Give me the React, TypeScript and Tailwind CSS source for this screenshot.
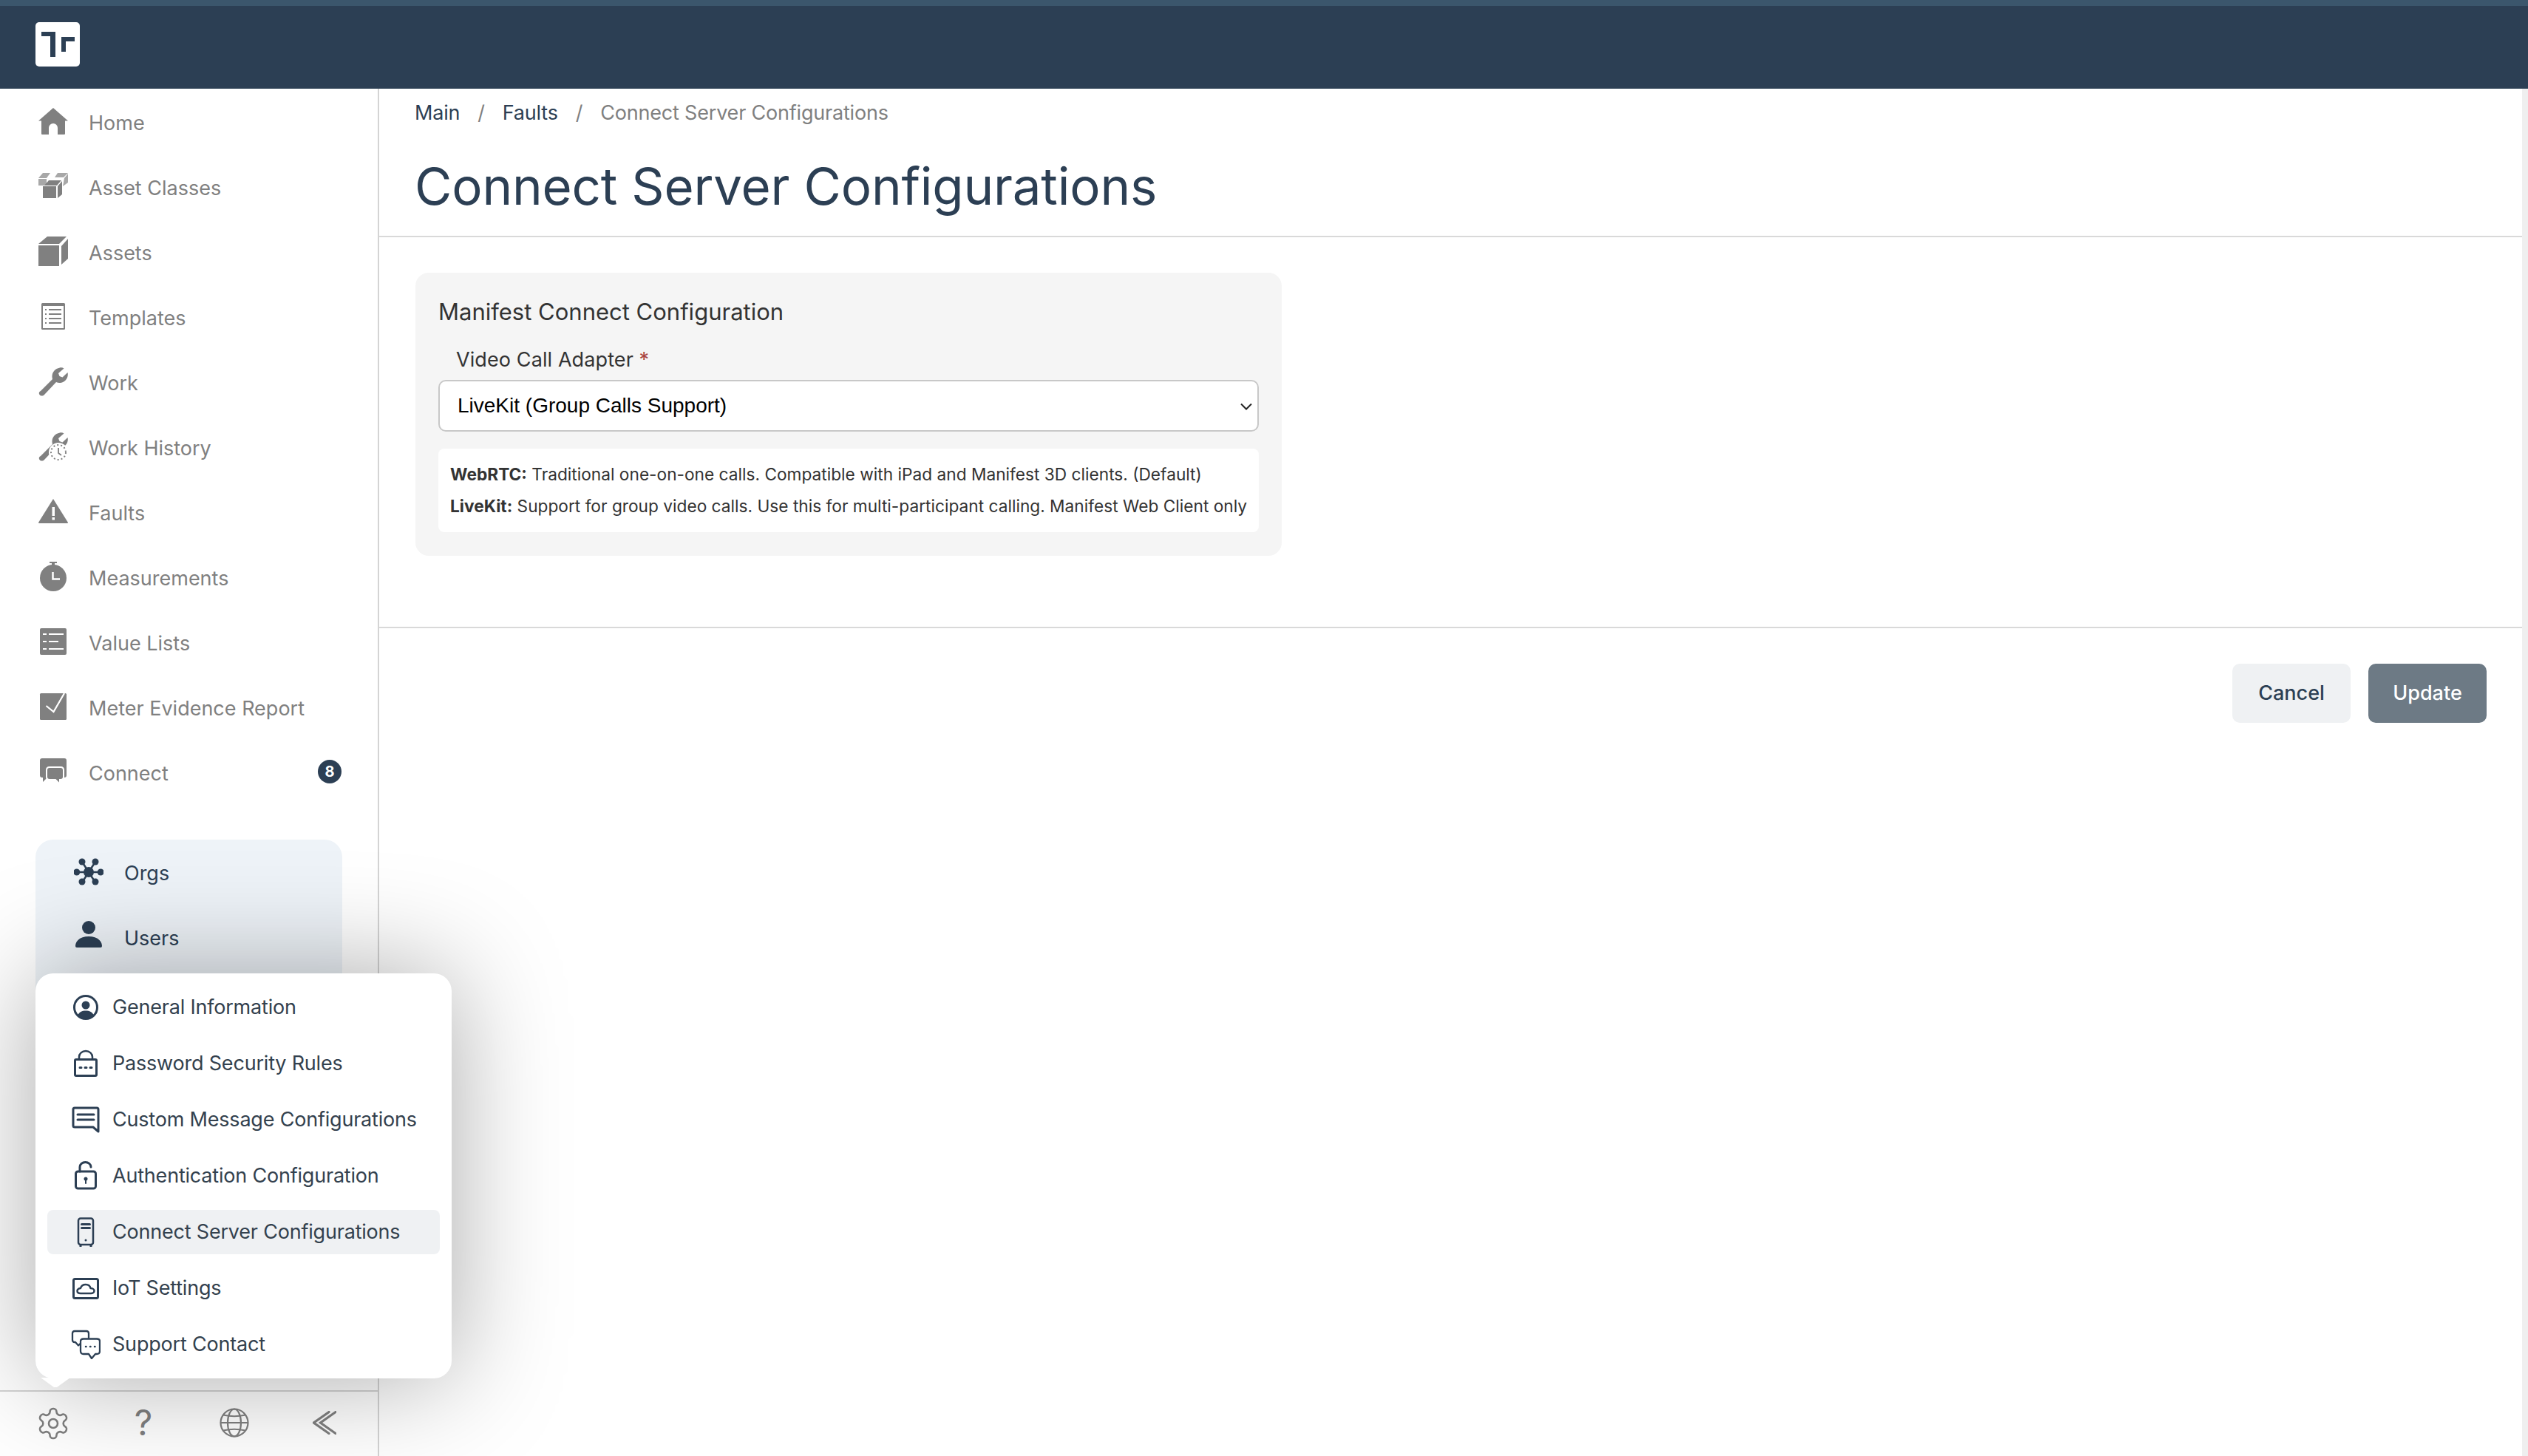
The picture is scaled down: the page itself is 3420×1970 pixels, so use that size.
import { ReactNode } from 'react';

const WRENCH =
  'M3 33 L19 17 C17 10 21 3 29 1.500 C31 1 33 1.500 34.500 2.500 L27 9 L28.500 13 L32.500 14.500 L39.500 8 C41 14 37 21 30 22 C28 22.300 26 22 24 21 L8 38 C6 40 3 40 1.500 38 C0 36 1 34 3 33 Z';

function NavIcon({ children }: { children: ReactNode }) {
  return (
    <svg viewBox="0 0 40 40" className="w-[40px] h-[40px] shrink-0 mb-[6px] text-[#808080]" fill="currentColor">
      {children}
    </svg>
  );
}

function MenuIcon({ children }: { children: ReactNode }) {
  return (
    <svg
      viewBox="0 0 40 40"
      className="w-[40px] h-[40px] shrink-0 text-[#2c3f54]"
      fill="none"
      stroke="currentColor"
      strokeWidth="3"
      strokeLinecap="round"
      strokeLinejoin="round"
    >
      {children}
    </svg>
  );
}

const navItems: { label: string; icon: ReactNode; badge?: string }[] = [
  {
    label: 'Home',
    icon: <path d="M20 2 L40 19.500 L36 19.500 V37 Q36 38 35 38 H26 V29 A6 6 0 0 0 14 29 V38 H5 Q4 38 4 37 V19.500 H0 Z" />,
  },
  {
    label: 'Asset Classes',
    icon: (
      <>
        <g fill="#a8a8a8">
          <polygon points="0,9 6,2 16,2 11,9" />
          <rect x="0" y="10" width="11" height="9" />
          <polygon points="26,2 40,2 34,8 22,8" />
          <polygon points="35,9 40,3 40,15 33,20" />
        </g>
        <polygon points="8,19 14,12 31,12 25,19" />
        <rect x="6" y="20" width="18" height="16" />
        <polygon points="26,20 32,13 32,31 26,36" />
      </>
    ),
  },
  {
    label: 'Assets',
    icon: (
      <>
        <polygon points="0,10 12,0 38,0 28,10" />
        <rect x="0" y="12" width="28" height="28" />
        <polygon points="31,13 40,3 40,30 31,38" />
      </>
    ),
  },
  {
    label: 'Templates',
    icon: (
      <>
        <rect x="4" y="2" width="32" height="36" rx="1.500" />
        <rect x="6" y="6" width="28" height="30" fill="#fff" />
        <path
          d="M14 11 H31 M14 17 H31 M14 23 H31 M14 29 H31 M9 11 H11 M9 17 H11 M9 23 H11 M9 29 H11"
          stroke="currentColor"
          strokeWidth="2"
        />
      </>
    ),
  },
  { label: 'Work', icon: <path d={WRENCH} /> },
  {
    label: 'Work History',
    icon: (
      <>
        <path d={WRENCH} />
        <circle cx="27" cy="28" r="13" fill="#fff" />
        <circle cx="27" cy="28" r="10" fill="none" stroke="currentColor" strokeWidth="2" strokeDasharray="2 3" />
        <path d="M27 22 V29 L31 32" fill="none" stroke="currentColor" strokeWidth="1.800" />
      </>
    ),
  },
  {
    label: 'Faults',
    icon: (
      <>
        <path d="M20 3 L40 35 Q40 36 39 36 H1 Q0 36 0 35 Z" />
        <rect x="18.500" y="14" width="3.500" height="12" fill="#fff" />
        <rect x="18.500" y="28" width="3.500" height="3.500" fill="#fff" />
      </>
    ),
  },
  {
    label: 'Measurements',
    icon: (
      <>
        <circle cx="20" cy="22" r="18" />
        <rect x="15" y="0" width="10" height="2" />
        <rect x="18" y="1" width="4" height="4" />
        <path d="M19.500 14 V23.500 H29" fill="none" stroke="#fff" strokeWidth="2.500" />
      </>
    ),
  },
  {
    label: 'Value Lists',
    icon: (
      <>
        <rect x="2" y="2" width="36" height="36" rx="2" />
        <path d="M6 10 H11 M14 10 H34 M6 20 H11 M14 20 H27 M6 30 H11 M14 30 H34" stroke="#fff" strokeWidth="2" />
      </>
    ),
  },
  {
    label: 'Meter Evidence Report',
    icon: (
      <>
        <rect x="2" y="2" width="36" height="36" rx="1.500" />
        <path d="M10.500 19 L20.500 27 L35 2" fill="none" stroke="#fff" strokeWidth="2.200" />
      </>
    ),
  },
  {
    label: 'Connect',
    badge: '8',
    icon: (
      <>
        <path d="M5 2 H35 Q38 2 38 5 V25 Q38 28 35 28 H12 L6 34 V28 H5 Q2 28 2 25 V5 Q2 2 5 2 Z" />
        <path
          d="M15 14 H30 Q34 14 34 18 V27 Q34 31 30 31 H29 V37 L23 31 H15 Q11 31 11 27 V18 Q11 14 15 14 Z"
          stroke="#fff"
          strokeWidth="2"
        />
      </>
    ),
  },
];

const settingsItems: { label: string; active?: boolean; icon: ReactNode }[] = [
  {
    label: 'General Information',
    icon: (
      <>
        <circle cx="20" cy="20" r="15.500" />
        <circle cx="20" cy="17" r="5.500" fill="currentColor" stroke="none" />
        <path d="M9 31 C11 26 15 24.500 20 24.500 C25 24.500 29 26 31 31 C28 34.500 24 35.500 20 35.500 C16 35.500 12 34.500 9 31 Z" fill="currentColor" stroke="none" />
      </>
    ),
  },
  {
    label: 'Password Security Rules',
    icon: (
      <>
        <rect x="5.500" y="14.500" width="29" height="22" rx="1.500" />
        <path d="M11 14 V11 A9 8 0 0 1 29 11 V14" strokeWidth="2.500" />
        <path d="M12 25.500 H14 M19 25.500 H21 M26 25.500 H28" />
      </>
    ),
  },
  {
    label: 'Custom Message Configurations',
    icon: (
      <>
        <path d="M5 4 H35 Q37 4 37 6 V36 L30 30 H5 Q3 30 3 28 V6 Q3 4 5 4 Z" />
        <path d="M9 13 H31 M9 20 H31" />
      </>
    ),
  },
  {
    label: 'Authentication Configuration',
    icon: (
      <>
        <rect x="6.500" y="14" width="27" height="23" rx="3" />
        <path d="M12 14 V8 A7.500 6.500 0 0 1 27 8" />
        <circle cx="20" cy="24" r="2.500" fill="currentColor" stroke="none" />
        <path d="M20 25 V30" strokeWidth="2" />
      </>
    ),
  },
  {
    label: 'Connect Server Configurations',
    active: true,
    icon: (
      <>
        <rect x="10" y="1.500" width="20" height="35.500" rx="3" strokeWidth="2.500" />
        <path d="M14.500 9.500 H25.500 M14.500 14.500 H25.500" />
        <circle cx="20" cy="31" r="1.500" fill="currentColor" stroke="none" />
        <path d="M13 38 V39.500 M27 38 V39.500" />
      </>
    ),
  },
  {
    label: 'IoT Settings',
    icon: (
      <>
        <rect x="3.500" y="7.500" width="33" height="26" rx="2" />
        <path
          d="M13 27 C10 27 8.500 25.500 8.500 23.500 C8.500 21.500 11 20 13 20 C14 16.500 17 15 20 15 C24 15 26 17.500 26.500 20 C29 20 31.500 21.500 31.500 23.500 C31.500 25.500 29.500 27 27 27 Z"
          strokeWidth="2.500"
        />
      </>
    ),
  },
  {
    label: 'Support Contact',
    icon: (
      <>
        <path d="M24 11 V5 Q24 2 21 2 H5 Q2 2 2 5 V14 Q2 17 5 17 H6 L10 21.500 L12 19.500" strokeWidth="2.300" />
        <path
          d="M17 12.500 H35 Q39 12.500 39 16 V29 Q39 33 35 33 H33 L28 39 L24 33 H17 Q13 33 13 29 V16 Q13 12.500 17 12.500 Z"
          strokeWidth="2.300"
        />
        <path d="M20 23 H20.500 M26 23 H26.500 M32 23 H32.500" strokeWidth="2.500" />
      </>
    ),
  },
];

function Header() {
  return (
    <header className="h-[120px] shrink-0 bg-[#2c3f54] border-t-[8px] border-[#3b566c] pl-[48px] pt-[22px]">
      <div className="w-[60px] h-[60px] rounded-[5px] bg-white">
        <svg viewBox="0 0 60 60" className="w-[60px] h-[60px]" fill="#2c3f54">
          <polygon points="8,13 27,13 27,47 20,47 20,19 8,19" />
          <polygon points="35,20 53,20 53,26 41,26 41,40 35,40" />
        </svg>
      </div>
    </header>
  );
}

function Sidebar() {
  return (
    <aside className="w-[513px] shrink-0 border-r-[2px] border-[#d4d4d4] flex flex-col relative">
      <nav className="pt-[3px]">
        {navItems.map((item) => (
          <div key={item.label} className="h-[88px] pl-[52px] pr-[49px] flex items-center">
            <NavIcon>{item.icon}</NavIcon>
            <span className="ml-[28px] text-[27px] text-[#808080]">{item.label}</span>
            {item.badge && (
              <span className="ml-auto mb-[6px] w-[32px] h-[32px] rounded-full bg-[#2c3f54] text-white text-[20px] font-bold flex items-center justify-center">
                {item.badge}
              </span>
            )}
          </div>
        ))}
      </nav>

      <div className="flex-1 mt-[45px] mb-[16px] ml-[48px] mr-[48px] pt-[2px] rounded-[24px] bg-[#eef3f8]">
        <div className="h-[88px] pl-[52px] flex items-center">
          <svg viewBox="0 0 40 40" className="w-[40px] h-[40px] mb-[4px] text-[#2c3f54]" fill="currentColor">
            <path d="M3 20 H37 M11 6 L29 34 M29 6 L11 34" stroke="currentColor" strokeWidth="2.500" />
            <circle cx="20" cy="20" r="7" />
            <circle cx="3.800" cy="20" r="4.500" />
            <circle cx="36.200" cy="20" r="4.500" />
            <circle cx="11" cy="6" r="4.500" />
            <circle cx="29" cy="6" r="4.500" />
            <circle cx="11" cy="33" r="4.500" />
            <circle cx="29" cy="33" r="4.500" />
          </svg>
          <span className="ml-[28px] text-[27px] text-[#2c3f54]">Orgs</span>
        </div>
        <div className="h-[88px] pl-[52px] flex items-center">
          <svg viewBox="0 0 40 40" className="w-[40px] h-[40px] mb-[8px] text-[#2c3f54]" fill="currentColor">
            <circle cx="20" cy="9" r="9" />
            <path d="M2 34 C2 26 10 21 20 21 C30 21 38 26 38 34 Q38 36 36 36 H4 Q2 36 2 34 Z" />
          </svg>
          <span className="ml-[28px] text-[27px] text-[#2c3f54]">Users</span>
        </div>
      </div>

      <div className="h-[89px] shrink-0 border-t-[2px] border-[#d4d4d4] flex items-center text-[#808080]">
        <svg
          viewBox="0 0 24 24"
          className="w-[48px] h-[48px] ml-[48px] -mt-[2px]"
          fill="none"
          stroke="currentColor"
          strokeWidth="1.300"
          strokeLinecap="round"
          strokeLinejoin="round"
        >
          <path d="M12.220 2h-.44a2 2 0 0 0-2 2v.18a2 2 0 0 1-1 1.730l-.43.25a2 2 0 0 1-2 0l-.15-.08a2 2 0 0 0-2.730.73l-.22.38a2 2 0 0 0 .730 2.730l.15.1a2 2 0 0 1 1 1.720v.510a2 2 0 0 1-1 1.740l-.15.090a2 2 0 0 0-.730 2.730l.22.38a2 2 0 0 0 2.730.73l.15-.08a2 2 0 0 1 2 0l.43.25a2 2 0 0 1 1 1.730V20a2 2 0 0 0 2 2h.44a2 2 0 0 0 2-2v-.18a2 2 0 0 1 1-1.730l.43-.25a2 2 0 0 1 2 0l.15.08a2 2 0 0 0 2.730-.73l.22-.39a2 2 0 0 0-.730-2.730l-.15-.08a2 2 0 0 1-1-1.740v-.5a2 2 0 0 1 1-1.740l.15-.09a2 2 0 0 0 .730-2.730l-.22-.38a2 2 0 0 0-2.730-.73l-.15.08a2 2 0 0 1-2 0l-.43-.25a2 2 0 0 1-1-1.730V4a2 2 0 0 0-2-2z" />
          <circle cx="12" cy="12" r="3" />
        </svg>
        <span className="ml-[83px] w-[30px] -mt-[4px] text-[48px] leading-none text-center">?</span>
        <svg viewBox="0 0 40 40" className="w-[40px] h-[40px] ml-[88px] -mt-[4px]" fill="none" stroke="currentColor" strokeWidth="2.200">
          <circle cx="20" cy="20" r="18.500" />
          <ellipse cx="20" cy="20" rx="9" ry="18.500" />
          <path d="M5 9.500 Q20 13 35 9.500 M1.500 20 H38.500 M5 30.500 Q20 27 35 30.500" />
        </svg>
        <svg viewBox="0 0 32 32" className="w-[32px] h-[32px] ml-[86px] -mt-[4px]" fill="none" stroke="currentColor" strokeWidth="3.200" strokeLinecap="round">
          <path d="M22 1.500 L1.500 16 L22 30.500 M31 1.500 L10.500 16 L31 30.500" />
        </svg>
      </div>
    </aside>
  );
}

function SettingsMenu() {
  return (
    <div className="absolute left-[48px] top-[1317px] w-[563px] h-[548px] rounded-[24px] bg-white px-[16px] pt-[16px] shadow-[0_0_150px_rgba(0,0,0,0.34)]">
      {settingsItems.map((item) => (
        <div
          key={item.label}
          className={`h-[60px] mb-[16px] pl-[32px] rounded-[8px] flex items-center text-[27px] tracking-[-0.2px] text-[#33414e] ${
            item.active ? 'bg-[#eff1f3]' : ''
          }`}
        >
          <MenuIcon>{item.icon}</MenuIcon>
          <span className="ml-[16px]">{item.label}</span>
        </div>
      ))}
      <svg viewBox="0 0 40 14" className="absolute left-[7px] top-[547px] w-[40px] h-[14px]" fill="#fff">
        <polygon points="0,0 40,0 22,13 18,13" />
      </svg>
    </div>
  );
}

function MainContent() {
  return (
    <main className="flex-1 min-w-0">
      <div className="h-[201px] border-b-[2px] border-[#d9d9d9] pl-[48px] pt-[16px]">
        <div className="h-[34px] flex items-center text-[27px] tracking-[-0.2px] text-[#2c3f54]">
          <span>Main</span>
          <span className="mx-[24px] text-[#808080]">/</span>
          <span>Faults</span>
          <span className="mx-[24px] text-[#808080]">/</span>
          <span className="text-[#808080]">Connect Server Configurations</span>
        </div>
        <h1 className="mt-[38px] text-[69px] leading-[88px] tracking-[-0.2px] font-normal text-[#2c3f54]">
          Connect Server Configurations
        </h1>
      </div>

      <div className="h-[529px] border-b-[2px] border-[#d9d9d9] pl-[49px] pt-[48px]">
        <section className="w-[1172px] h-[383px] rounded-[18px] bg-[#f5f5f5] px-[31px] pt-[32px]">
          <h2 className="text-[31px] leading-[42px] font-normal text-[#333333]">Manifest Connect Configuration</h2>
          <label className="block mt-[25px] ml-[24px] text-[27px] tracking-[0.1px] leading-[38px] text-[#333333]">
            Video Call Adapter <span className="text-[#a94442]">*</span>
          </label>
          <div className="relative mt-[8px]">
            <select
              defaultValue="livekit"
              className="block w-full h-[70px] appearance-none rounded-[10px] border-[2px] border-[#c8c8c8] bg-white pl-[24px] text-[28px] text-black font-['Liberation_Sans',sans-serif]"
            >
              <option value="webrtc">WebRTC</option>
              <option value="livekit">LiveKit (Group Calls Support)</option>
            </select>
            <svg viewBox="0 0 16 10" className="absolute right-[9px] top-[31px] w-[16px] h-[10px]" fill="none" stroke="#222" strokeWidth="2">
              <path d="M1 1.500 L8 8.500 L15 1.500" />
            </svg>
          </div>
          <div className="mt-[23px] h-[113px] rounded-[8px] bg-white pl-[16px] pt-[13px] text-[22.700px] leading-[43px] whitespace-nowrap text-[#333333]">
            <p>
              <b>WebRTC:</b> Traditional one-on-one calls. Compatible with iPad and Manifest 3D clients. (Default)
            </p>
            <p>
              <b>LiveKit:</b> Support for group video calls. Use this for multi-participant calling. Manifest Web Client only
            </p>
          </div>
        </section>
      </div>

      <div className="flex justify-end gap-[24px] pt-[48px] pr-[48px]">
        <button className="w-[160px] h-[80px] rounded-[10px] bg-[#eff1f3] text-[27px] font-medium text-[#2c3f54]">Cancel</button>
        <button className="w-[160px] h-[80px] rounded-[10px] bg-[#6d7a85] text-[27px] font-medium text-white">Update</button>
      </div>
    </main>
  );
}

export default function App() {
  return (
    <div className="relative h-[1970px] w-[3420px] overflow-hidden bg-white flex flex-col font-[Inter,sans-serif]">
      <Header />
      <div className="flex-1 flex min-h-0">
        <Sidebar />
        <MainContent />
        <div className="w-[8px] shrink-0 bg-[#efefef]" />
      </div>
      <SettingsMenu />
    </div>
  );
}
